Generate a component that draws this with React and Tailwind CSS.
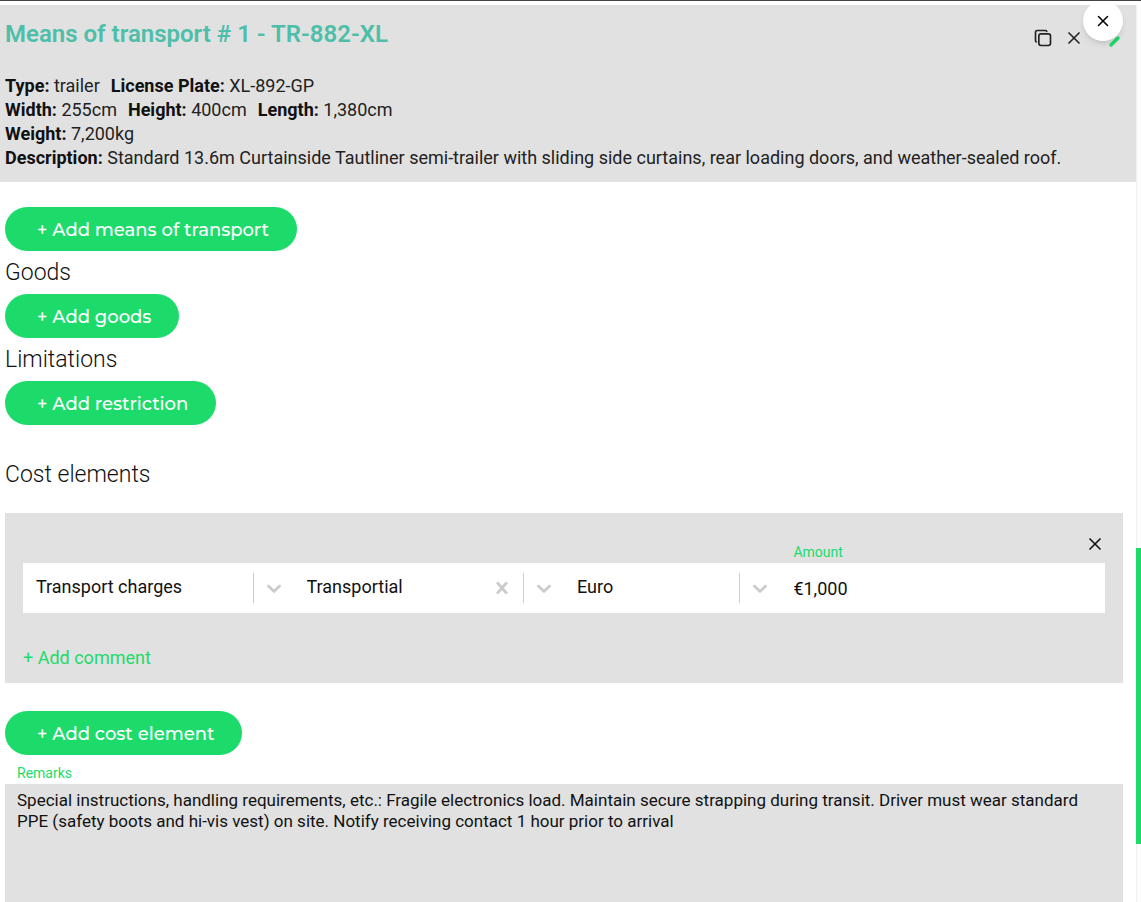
import React, { useState } from 'react';
import { TbCopy, TbX } from 'react-icons/tb';

const PillButton = ({ children }) => (
    <button
        type="button"
        className="flex h-11 items-center rounded-full bg-[#1ddb6b] pt-[2px] pr-7 pl-8 font-['Montserrat','Inter',sans-serif] text-lg font-medium text-white"
    >
        {children}
    </button>
);

const SectionTitle = ({ children }) => (
    <h2 className="text-[23px] leading-[43px] font-light">{children}</h2>
);

const Field = ({ label, children }) => (
    <span className="mr-[11px]">
        <strong className="font-bold text-[#111111]">{label}:</strong> {children}
    </span>
);

const SelectField = ({ label, options, clearable }) => {
    const [value, setValue] = useState(options[0]);

    return (
        <div className="relative flex items-center">
            <select
                aria-label={label}
                value={value}
                onChange={(e) => setValue(e.target.value)}
                className="h-[50px] w-full appearance-none bg-transparent pr-20 pb-[2px] pl-[13px] outline-none"
            >
                {options.map((option) => (
                    <option key={option}>{option}</option>
                ))}
            </select>
            {/* Indicators sit over the native select */}
            <div className="pointer-events-none absolute inset-y-0 right-0 flex items-center text-[#cccccc]">
                {clearable && (
                    <svg viewBox="0 0 20 20" className="mr-[9px] size-6 fill-current">
                        <path d="M14.348 14.849c-0.469 0.469-1.229 0.469-1.697 0l-2.651-3.030-2.651 3.029c-0.469 0.469-1.229 0.469-1.697 0-0.469-0.469-0.469-1.229 0-1.697l2.758-3.15-2.759-3.152c-0.469-0.469-0.469-1.228 0-1.697s1.228-0.469 1.697 0l2.652 3.031 2.651-3.031c0.469-0.469 1.228-0.469 1.697 0s0.469 1.229 0 1.697l-2.758 3.152 2.758 3.15c0.469 0.469 0.469 1.229 0 1.698z" />
                    </svg>
                )}
                <span className="h-[30px] w-px bg-[#cccccc]" />
                <svg viewBox="0 0 20 20" className="mx-2 size-6 fill-current">
                    <path d="M4.516 7.548c0.436-0.446 1.043-0.481 1.576 0l3.908 3.747 3.908-3.747c0.533-0.481 1.141-0.446 1.574 0 0.436 0.445 0.408 1.197 0 1.615-0.406 0.418-4.695 4.502-4.695 4.502-0.217 0.223-0.502 0.335-0.787 0.335s-0.57-0.112-0.789-0.335c0 0-4.287-4.084-4.695-4.502s-0.436-1.17 0-1.615z" />
                </svg>
            </div>
        </div>
    );
};

const TransportCard = () => (
    <section className="bg-[#e1e1e1] pt-[13px] pr-[17px] pb-3 pl-[5px] text-[#222222]">
        <div className="flex items-start justify-between">
            <h1 className="text-2xl leading-8 font-semibold text-[#4dbfa9]">Means of transport # 1 - TR-882-XL</h1>
            <div className="flex items-center gap-[11px] pt-2">
                <button type="button" aria-label="Copy"><TbCopy size={20} /></button>
                <button type="button" aria-label="Remove"><TbX size={20} /></button>
                <button type="button" aria-label="Edit" className="text-[#1ddb6b]">
                    <svg viewBox="0 0 24 24" className="h-6 w-6 overflow-visible">
                        <path d="M16 19 23 12" fill="none" stroke="currentColor" strokeWidth="3.5" strokeLinecap="round" />
                    </svg>
                </button>
            </div>
        </div>
        <div className="mt-6 text-lg leading-6">
            <p>
                <Field label="Type">trailer</Field>
                <Field label="License Plate">XL-892-GP</Field>
            </p>
            <p>
                <Field label="Width">255cm</Field>
                <Field label="Height">400cm</Field>
                <Field label="Length">1,380cm</Field>
            </p>
            <p><Field label="Weight">7,200kg</Field></p>
            <p>
                <Field label="Description">
                    Standard 13.6m Curtainside Tautliner semi-trailer with sliding side curtains, rear loading doors, and weather-sealed roof.
                </Field>
            </p>
        </div>
    </section>
);

const CostElement = () => (
    <section className="bg-[#e1e1e1] px-[18px] pb-3">
        <div className="grid h-[50px] grid-cols-[25fr_25fr_20fr_30fr]">
            <div className="col-start-4 flex items-end justify-between pl-[13px]">
                <label htmlFor="amount" className="text-sm leading-[22px] text-[#1ddb6b]">Amount</label>
                <button type="button" aria-label="Remove cost element" className="mb-[9px]">
                    <TbX size={20} />
                </button>
            </div>
        </div>
        <div className="grid grid-cols-[25fr_25fr_20fr_30fr] bg-white text-lg">
            <SelectField label="Cost type" options={['Transport charges']} />
            <SelectField label="Company" options={['Transportial']} clearable />
            <SelectField label="Currency" options={['Euro']} />
            <input id="amount" type="text" defaultValue="€1,000" className="h-[50px] w-full min-w-0 pl-[13px] outline-none" />
        </div>
        <button type="button" className="mt-8 block text-lg leading-[26px] text-[#1ddb6b]">+ Add comment</button>
    </section>
);

const App = () => (
    <div className="flex h-screen flex-col overflow-hidden border-t border-[#444444] bg-white pt-1 font-['Roboto',sans-serif] text-[#111111]">
        <div className="flex min-h-0 flex-1">
            <main className="flex min-w-0 flex-1 flex-col">
                <TransportCard />
                <div className="flex flex-1 flex-col items-start pt-[25px] pr-[13px] pl-[5px]">
                    <PillButton>+ Add means of transport</PillButton>
                    <SectionTitle>Goods</SectionTitle>
                    <PillButton>+ Add goods</PillButton>
                    <SectionTitle>Limitations</SectionTitle>
                    <PillButton>+ Add restriction</PillButton>
                    <div className="mt-7 w-full pb-7">
                        <SectionTitle>Cost elements</SectionTitle>
                        <div className="mt-[17px]">
                            <CostElement />
                        </div>
                    </div>
                    <PillButton>+ Add cost element</PillButton>
                    <label htmlFor="remarks" className="pt-[7px] pl-3 text-sm leading-[22px] text-[#1ddb6b]">Remarks</label>
                    <textarea
                        id="remarks"
                        className="w-full flex-1 resize-none bg-[#e1e1e1] px-3 pt-[6px] text-[17px] leading-[21px] outline-none"
                        defaultValue="Special instructions, handling requirements, etc.: Fragile electronics load. Maintain secure strapping during transit. Driver must wear standard PPE (safety boots and hi-vis vest) on site. Notify receiving contact 1 hour prior to arrival"
                    />
                </div>
            </main>
            {/* Scroll track */}
            <div className="relative w-[5px] border-l border-[#f0f0f0] bg-[#fcfcfc]">
                <div className="absolute top-[60.5%] -left-px h-[33%] w-[5px] bg-[#1ddb6b]" />
            </div>
        </div>
        <button
            type="button"
            aria-label="Close"
            className="absolute top-px right-[18px] flex size-10 items-center justify-center rounded-full bg-white text-black shadow-md"
        >
            <TbX size={18} />
        </button>
    </div>
);

export default App;
